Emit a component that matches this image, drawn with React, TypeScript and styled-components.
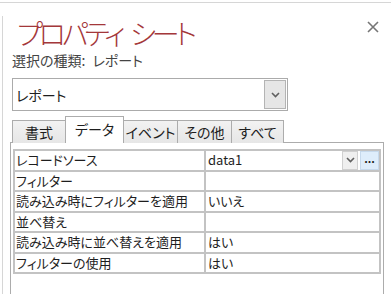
import { FC } from 'react';
import styled, { createGlobalStyle } from 'styled-components';

// ----------------------------------------------------------------------------

const GlobalStyle = createGlobalStyle`
  html, body {
    margin: 0;
    padding: 0;
    background: #ffffff;
  }

  body {
    font-family: 'Noto Sans CJK JP', 'Noto Sans', sans-serif;
    font-feature-settings: 'palt';
    color: #1e1e1e;
  }
`;

interface PropertyRow {
  label: string;
  value: string;
  builder?: boolean;
}

const rows: PropertyRow[] = [
  { label: 'レコードソース', value: 'data1', builder: true },
  { label: 'フィルター', value: '' },
  { label: '読み込み時にフィルターを適用', value: 'いいえ' },
  { label: '並べ替え', value: '' },
  { label: '読み込み時に並べ替えを適用', value: 'はい' },
  { label: 'フィルターの使用', value: 'はい' },
];

const tabs = [
  { label: '書式', width: 54 },
  { label: 'データ', width: 59, active: true },
  { label: 'イベント', width: 55 },
  { label: 'その他', width: 55 },
  { label: 'すべて', width: 53 },
];

// ----------------------------------------------------------------------------

const Chevron: FC = () => (
  <svg width="9" height="6" viewBox="0 0 9 6">
    <path d="M1 1 L4.5 4.5 L8 1" fill="none" stroke="#606060" strokeWidth="1.6" />
  </svg>
);

const CloseIcon: FC = () => (
  <svg width="12" height="12" viewBox="0 0 12 12">
    <path d="M1 1 L11 11 M11 1 L1 11" stroke="#767676" strokeWidth="1.6" />
  </svg>
);

const App: FC = () => {
  return (
    <>
      <GlobalStyle />
      <Sheet>
        <Body>
          <Header>
            <Title>
              プロパティ <TitleWord>シート</TitleWord>
            </Title>
            <CloseButton>
              <CloseIcon />
            </CloseButton>
          </Header>
          <SelectionType>選択の種類: レポート</SelectionType>
          <ObjectSelect>
            <span>レポート</span>
            <SelectButton>
              <Chevron />
            </SelectButton>
          </ObjectSelect>
          <TabRow>
            {tabs.map((t) => (
              <Tab key={t.label} $active={!!t.active} style={{ width: t.width }}>
                {t.label}
              </Tab>
            ))}
          </TabRow>
          <Panel>
            <Grid>
              {rows.map((r) => (
                <Row key={r.label}>
                  <LabelCell>{r.label}</LabelCell>
                  <ValueCell>
                    <ValueText>{r.value}</ValueText>
                    {r.builder && (
                      <>
                        <CellDrop>
                          <Chevron />
                        </CellDrop>
                        <BuildButton>...</BuildButton>
                      </>
                    )}
                  </ValueCell>
                </Row>
              ))}
            </Grid>
          </Panel>
        </Body>
      </Sheet>
    </>
  );
};

// ----------------------------------------------------------------------------

const Sheet = styled.div`
  margin-top: 2px;
  border-top: 1px solid #d6d6d6;
  height: 291px;
  overflow: hidden;
`;

const Body = styled.div`
  margin-left: 2px;
  border-left: 1px solid #d6d6d6;
  height: 100%;
`;

const Header = styled.div`
  display: flex;
  justify-content: space-between;
  align-items: flex-start;
  margin-top: 13px;
  padding-left: 14px;
  padding-right: 12px;
  height: 34px;
`;

const Title = styled.h1`
  margin: 0;
  font-size: 28px;
  font-weight: 300;
  line-height: 34px;
  color: #a4373a;
  white-space: nowrap;
  letter-spacing: -4px;
`;

const TitleWord = styled.span`
  margin-left: 6px;
`;

const CloseButton = styled.div`
  margin-top: 5px;
  display: flex;
`;

const SelectionType = styled.div`
  margin-left: 9px;
  margin-top: 2px;
  font-size: 14px;
  line-height: 17px;
  color: #444444;
  word-spacing: 4px;
`;

const ObjectSelect = styled.div`
  display: flex;
  align-items: center;
  justify-content: space-between;
  box-sizing: border-box;
  margin: 9px 0 0 9px;
  width: 276px;
  height: 33px;
  padding: 1px 1px 1px 3px;
  border: 1px solid #ababab;
  font-size: 14px;
`;

const SelectButton = styled.div`
  display: flex;
  align-items: center;
  justify-content: center;
  box-sizing: border-box;
  width: 22px;
  height: 29px;
  background: #e6e6e6;
  border: 1px solid #b4b4b4;
`;

const TabRow = styled.div`
  display: flex;
  align-items: flex-end;
  margin: 5px 0 -1px 9px;
  position: relative;
  z-index: 1;
`;

const Tab = styled.div<{ $active: boolean }>`
  display: flex;
  align-items: center;
  justify-content: center;
  box-sizing: border-box;
  height: ${(p) => (p.$active ? 27 : 23)}px;
  padding-bottom: ${(p) => (p.$active ? 3 : 1)}px;
  border: 1px solid #acacac;
  border-bottom: none;
  background: ${(p) => (p.$active ? '#ffffff' : 'linear-gradient(#f2f2f2, #e6e6e6)')};
  font-size: 14px;
  color: #1e1e1e;

  & + & {
    margin-left: -1px;
  }
`;

const Panel = styled.div`
  box-sizing: border-box;
  margin-left: 7px;
  width: 374px;
  height: 160px;
  padding: 6px 1px 0 2px;
  border: 1px solid #acacac;
  border-bottom: none;
`;

const Grid = styled.div`
  display: grid;
  grid-template-columns: 189px 173px;
  grid-auto-rows: 18.5px;
  gap: 2px;
  padding: 2px;
  width: 368px;
  box-sizing: border-box;
  background: #c3c3c3;
`;

const Row = styled.div`
  display: contents;
`;

const LabelCell = styled.div`
  background: #ffffff;
  padding-left: 1px;
  font-size: 13px;
  line-height: 18px;
  white-space: nowrap;
  overflow: hidden;
`;

const ValueCell = styled.div`
  display: flex;
  align-items: stretch;
  background: #ffffff;
  font-size: 13px;
  line-height: 18px;
`;

const ValueText = styled.span`
  flex: 1;
  padding-left: 2px;
`;

const CellDrop = styled.div`
  display: flex;
  align-items: center;
  justify-content: center;
  box-sizing: border-box;
  width: 16px;
  margin: 0 2px 0 0;
  background: #efefef;
  border: 1px solid #d0d0d0;
`;

const BuildButton = styled.div`
  display: flex;
  align-items: center;
  justify-content: center;
  box-sizing: border-box;
  width: 19px;
  background: #deedfb;
  border: 1px solid #c6d9ec;
  font-size: 11px;
  font-weight: 700;
  line-height: 1;
  padding-bottom: 4px;
  color: #1a1a1a;
`;

export default App;
